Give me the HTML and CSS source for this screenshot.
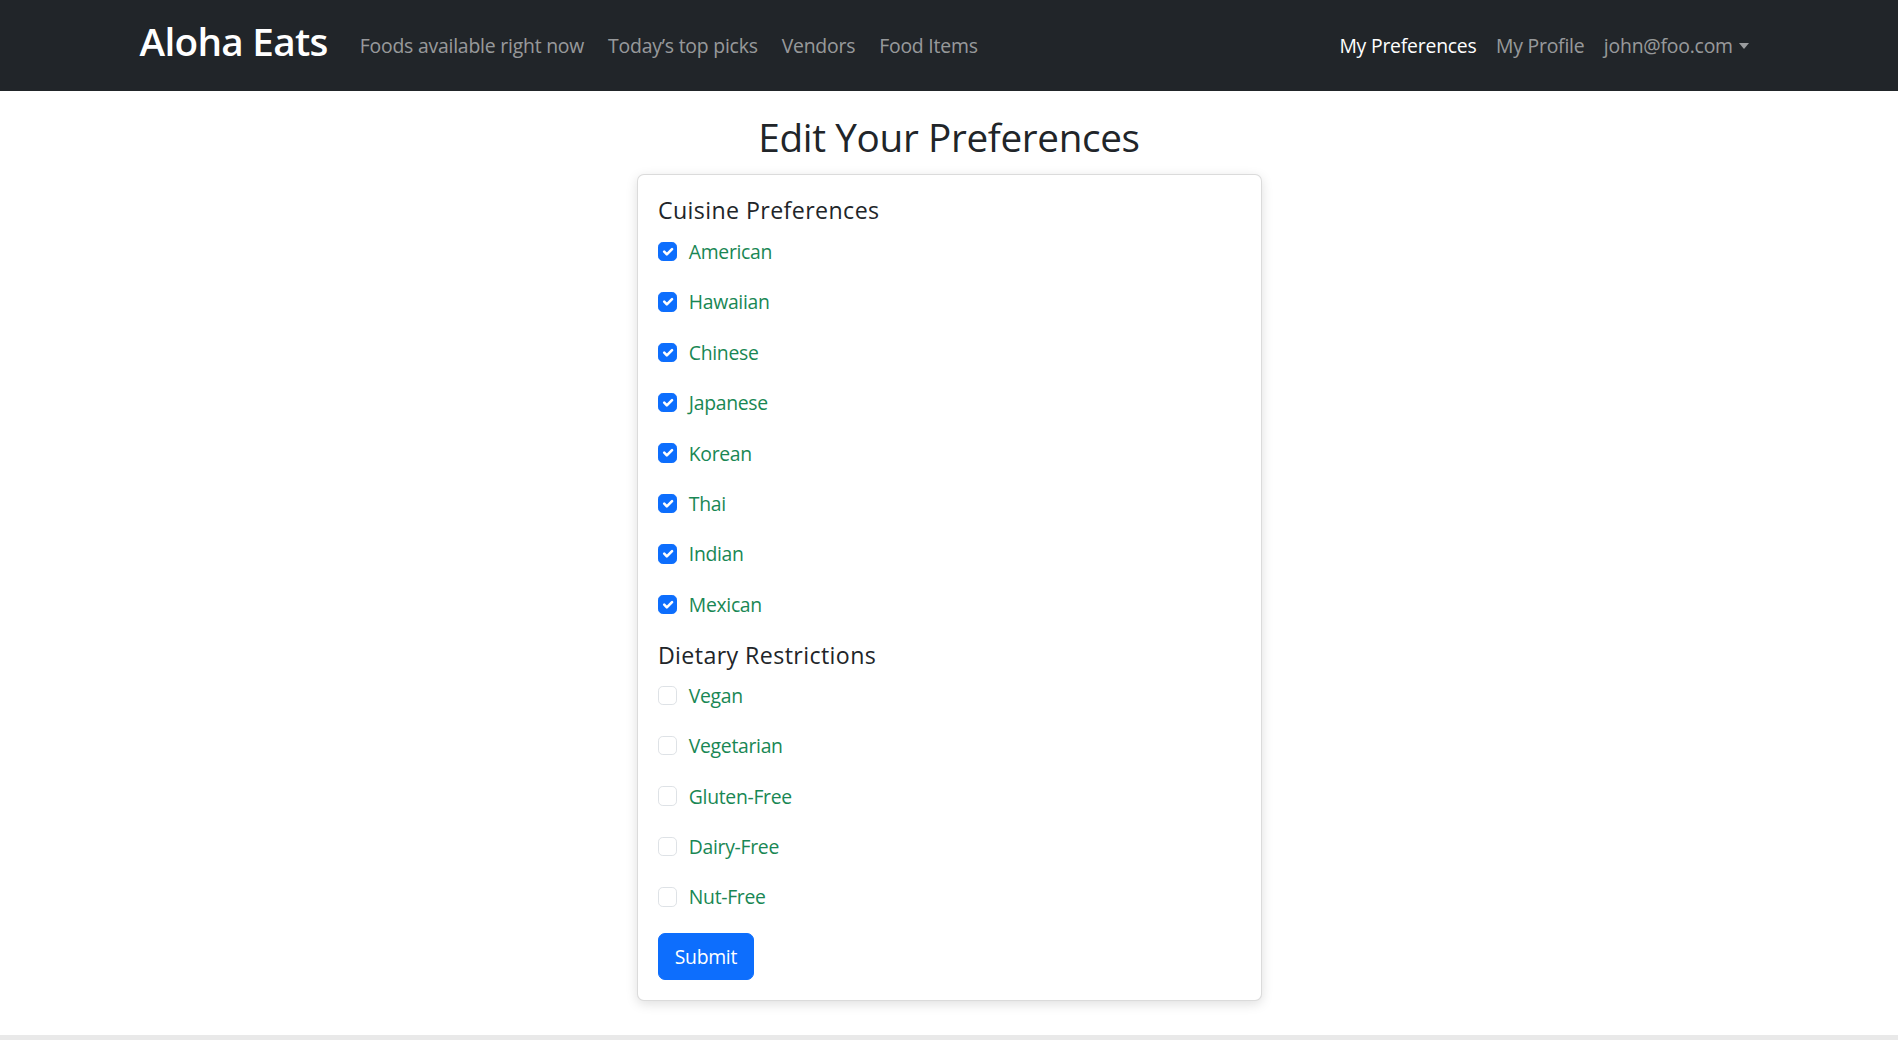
FILE: index.html
```html
<!DOCTYPE html>
<html lang="en">
<head>
<meta charset="utf-8">
<title>Aloha Eats - Edit Your Preferences</title>
<link rel="stylesheet" href="styles.css">
</head>
<body>
<nav class="navbar">
  <div class="nav-inner">
    <a class="brand" href="#">Aloha Eats</a>
    <ul class="nav-left">
      <li><a class="nav-link" href="#">Foods available right now</a></li>
      <li><a class="nav-link" href="#">Today’s top picks</a></li>
      <li><a class="nav-link" href="#">Vendors</a></li>
      <li><a class="nav-link" href="#">Food Items</a></li>
    </ul>
    <ul class="nav-right">
      <li><a class="nav-link active" href="#">My Preferences</a></li>
      <li><a class="nav-link" href="#">My Profile</a></li>
      <li><a class="nav-link dropdown" href="#">john@foo.com<span class="caret"></span></a></li>
    </ul>
  </div>
</nav>

<main class="main">
  <h2 class="title">Edit Your Preferences</h2>
  <form class="card">
    <h4 class="section">Cuisine Preferences</h4>
    <div class="check"><span class="box checked"><svg viewBox="0 0 20 20"><path d="M6 10l3 3l6-6"/></svg></span><label>American</label></div>
    <div class="check"><span class="box checked"><svg viewBox="0 0 20 20"><path d="M6 10l3 3l6-6"/></svg></span><label>Hawaiian</label></div>
    <div class="check"><span class="box checked"><svg viewBox="0 0 20 20"><path d="M6 10l3 3l6-6"/></svg></span><label>Chinese</label></div>
    <div class="check"><span class="box checked"><svg viewBox="0 0 20 20"><path d="M6 10l3 3l6-6"/></svg></span><label>Japanese</label></div>
    <div class="check"><span class="box checked"><svg viewBox="0 0 20 20"><path d="M6 10l3 3l6-6"/></svg></span><label>Korean</label></div>
    <div class="check"><span class="box checked"><svg viewBox="0 0 20 20"><path d="M6 10l3 3l6-6"/></svg></span><label>Thai</label></div>
    <div class="check"><span class="box checked"><svg viewBox="0 0 20 20"><path d="M6 10l3 3l6-6"/></svg></span><label>Indian</label></div>
    <div class="check"><span class="box checked"><svg viewBox="0 0 20 20"><path d="M6 10l3 3l6-6"/></svg></span><label>Mexican</label></div>

    <h4 class="section section-second">Dietary Restrictions</h4>
    <div class="check"><span class="box"></span><label>Vegan</label></div>
    <div class="check"><span class="box"></span><label>Vegetarian</label></div>
    <div class="check"><span class="box"></span><label>Gluten-Free</label></div>
    <div class="check"><span class="box"></span><label>Dairy-Free</label></div>
    <div class="check"><span class="box"></span><label>Nut-Free</label></div>

    <button class="btn" type="button">Submit</button>
  </form>
</main>

<footer class="footer"></footer>
</body>
</html>
```

FILE: styles.css
```css
* { box-sizing: border-box; }

html, body {
  margin: 0;
  padding: 0;
}

body {
  font-family: "Open Sans", "Noto Sans", "Liberation Sans", sans-serif;
  font-size: 19.36px;
  line-height: 1.5;
  color: #212529;
  background: #fff;
}

a { text-decoration: none; }

.navbar {
  background: #212529;
  height: 91px;
  display: flex;
  align-items: center;
}

.nav-inner {
  width: 1619px;
  margin: 0 auto;
  display: flex;
  align-items: center;
}

.brand {
  color: #fff;
  font-size: 38.7px;
  font-weight: 600;
  line-height: 1.5;
  margin-right: 20px;
  letter-spacing: -0.7px;
  position: relative;
  top: -4px;
}

.nav-left, .nav-right {
  list-style: none;
  margin: 0;
  padding: 0;
  display: flex;
  align-items: center;
}

.nav-right { margin-left: auto; }

.nav-link {
  display: block;
  color: rgba(255, 255, 255, 0.55);
  font-size: 19.36px;
  line-height: 29px;
  padding: 8px 12px;
  letter-spacing: -0.2px;
}

.nav-right .nav-link { padding: 8px 9.7px; }

.nav-link.active { color: #fff; }

.caret {
  display: inline-block;
  margin-left: 6px;
  vertical-align: 4px;
  border-top: 6px solid rgba(255, 255, 255, 0.55);
  border-left: 5.8px solid transparent;
  border-right: 5.8px solid transparent;
}

.main {
  display: flex;
  flex-direction: column;
  align-items: center;
  padding-bottom: 34.5px;
}

.title {
  margin: 22.75px 0 13.75px;
  font-size: 38.7px;
  font-weight: 500;
  line-height: 46.5px;
  letter-spacing: -0.35px;
}

.card {
  width: 625px;
  background: #fff;
  border: 1px solid rgba(0, 0, 0, 0.14);
  border-radius: 7px;
  box-shadow: 0 3px 12px rgba(0, 0, 0, 0.13);
  padding: 20.4px 19.4px 19.4px 20.4px;
  display: flex;
  flex-direction: column;
  align-items: flex-start;
}

.section {
  margin: 1.4px 0 12.5px;
  font-size: 23.2px;
  font-weight: 500;
  line-height: 27.8px;
  letter-spacing: 0.4px;
}

.section-second { margin-bottom: 11.5px; }

.check {
  display: flex;
  align-items: center;
  height: 29px;
  margin-bottom: 21.4px;
  gap: 11.5px;
}

.box {
  width: 19.4px;
  height: 19.4px;
  border: 1px solid #dee2e6;
  border-radius: 4.8px;
  background: #fff;
  display: flex;
  align-items: center;
  justify-content: center;
  flex: none;
}

.box.checked {
  background: #0d6efd;
  border-color: #0d6efd;
}

.box svg {
  width: 19.4px;
  height: 19.4px;
  fill: none;
  stroke: #fff;
  stroke-width: 3;
  stroke-linecap: round;
  stroke-linejoin: round;
}

.check label {
  color: #198754;
  font-size: 19.36px;
  line-height: 29px;
  letter-spacing: -0.3px;
}

.btn {
  font-family: inherit;
  margin-top: 0.6px;
  height: 47px;
  width: 96px;
  padding: 0;
  background: #0d6efd;
  color: #fff;
  border: 1px solid #0d6efd;
  border-radius: 7px;
  font-size: 19.36px;
  line-height: 29px;
  font-weight: 500;
  letter-spacing: -0.3px;
}

.footer {
  height: 6px;
  background: #e9e9e9;
}
```
